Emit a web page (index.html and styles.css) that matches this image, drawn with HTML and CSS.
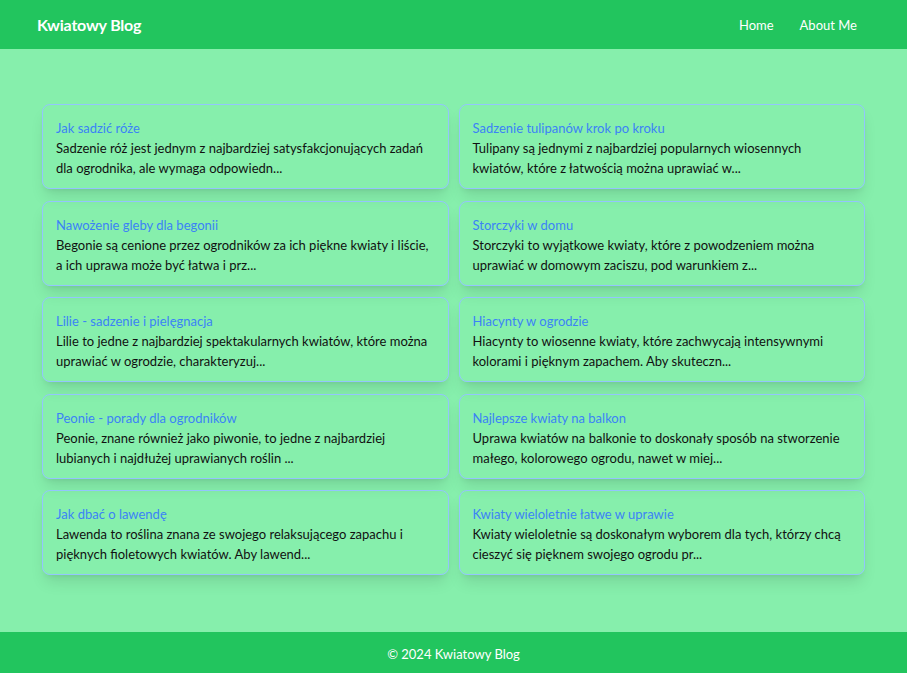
FILE: index.html
```html
<!DOCTYPE html>
<html lang="pl">
<head>
<meta charset="utf-8">
<title>Kwiatowy Blog</title>
<link rel="stylesheet" href="styles.css">
</head>
<body>
<header class="topbar">
  <a class="logo" href="#">Kwiatowy Blog</a>
  <nav class="nav">
    <a href="#">Home</a>
    <a href="#">About Me</a>
  </nav>
</header>
<main class="content">
  <div class="grid">
    <article class="card">
      <a class="card-title" href="#">Jak sadzić róże</a>
      <p class="card-text">Sadzenie róż jest jednym z najbardziej satysfakcjonujących zadań dla ogrodnika, ale wymaga odpowiedn...</p>
    </article>
    <article class="card">
      <a class="card-title" href="#">Sadzenie tulipanów krok po kroku</a>
      <p class="card-text">Tulipany są jednymi z najbardziej popularnych wiosennych kwiatów, które z łatwością można uprawiać w...</p>
    </article>
    <article class="card">
      <a class="card-title" href="#">Nawożenie gleby dla begonii</a>
      <p class="card-text">Begonie są cenione przez ogrodników za ich piękne kwiaty i liście, a ich uprawa może być łatwa i prz...</p>
    </article>
    <article class="card">
      <a class="card-title" href="#">Storczyki w domu</a>
      <p class="card-text">Storczyki to wyjątkowe kwiaty, które z powodzeniem można uprawiać w domowym zaciszu, pod warunkiem z...</p>
    </article>
    <article class="card">
      <a class="card-title" href="#">Lilie - sadzenie i pielęgnacja</a>
      <p class="card-text">Lilie to jedne z najbardziej spektakularnych kwiatów, które można uprawiać w ogrodzie, charakteryzuj...</p>
    </article>
    <article class="card">
      <a class="card-title" href="#">Hiacynty w ogrodzie</a>
      <p class="card-text">Hiacynty to wiosenne kwiaty, które zachwycają intensywnymi kolorami i pięknym zapachem. Aby skuteczn...</p>
    </article>
    <article class="card">
      <a class="card-title" href="#">Peonie - porady dla ogrodników</a>
      <p class="card-text">Peonie, znane również jako piwonie, to jedne z najbardziej lubianych i najdłużej uprawianych roślin ...</p>
    </article>
    <article class="card">
      <a class="card-title" href="#">Najlepsze kwiaty na balkon</a>
      <p class="card-text">Uprawa kwiatów na balkonie to doskonały sposób na stworzenie małego, kolorowego ogrodu, nawet w miej...</p>
    </article>
    <article class="card">
      <a class="card-title" href="#">Jak dbać o lawendę</a>
      <p class="card-text">Lawenda to roślina znana ze swojego relaksującego zapachu i pięknych fioletowych kwiatów. Aby lawend...</p>
    </article>
    <article class="card">
      <a class="card-title" href="#">Kwiaty wieloletnie łatwe w uprawie</a>
      <p class="card-text">Kwiaty wieloletnie są doskonałym wyborem dla tych, którzy chcą cieszyć się pięknem swojego ogrodu pr...</p>
    </article>
  </div>
</main>
<footer class="footer">© 2024 Kwiatowy Blog</footer>
</body>
</html>
```

FILE: styles.css
```css
* { box-sizing: border-box; }
html, body { margin: 0; padding: 0; }
body {
  font-family: Lato, "Open Sans", sans-serif;
  background: #86efac;
  color: #111827;
  min-height: 673px;
  display: flex;
  flex-direction: column;
}
a { text-decoration: none; }
.topbar {
  height: 49px;
  background: #22c55e;
  display: flex;
  align-items: center;
  justify-content: space-between;
  padding: 0 50px 0 37px;
}
.logo {
  color: #fff;
  font-weight: 700;
  font-size: 16px;
  letter-spacing: -0.2px;
}
.nav {
  display: flex;
  gap: 26px;
}
.nav a {
  color: #fff;
  font-size: 13px;
}
.content {
  flex: 1;
  padding: 55px 42px 57px;
}
.grid {
  display: grid;
  grid-template-columns: 1fr 1fr;
  gap: 11.5px 10px;
}
.card {
  border: 1px solid #93c5fd;
  border-radius: 8px;
  padding: 13px 12px 10px 13px;
  box-shadow: 0 10px 15px -3px rgba(0,0,0,0.1), 0 4px 6px -4px rgba(0,0,0,0.1);
  font-size: 13px;
  line-height: 20px;
}
.card-title {
  display: block;
  color: #3b82f6;
}
.card-text {
  margin: 0;
  color: #111;
}
.footer {
  height: 41px;
  padding-top: 3px;
  background: #22c55e;
  color: #fff;
  font-size: 13px;
  display: flex;
  align-items: center;
  justify-content: center;
}
```
